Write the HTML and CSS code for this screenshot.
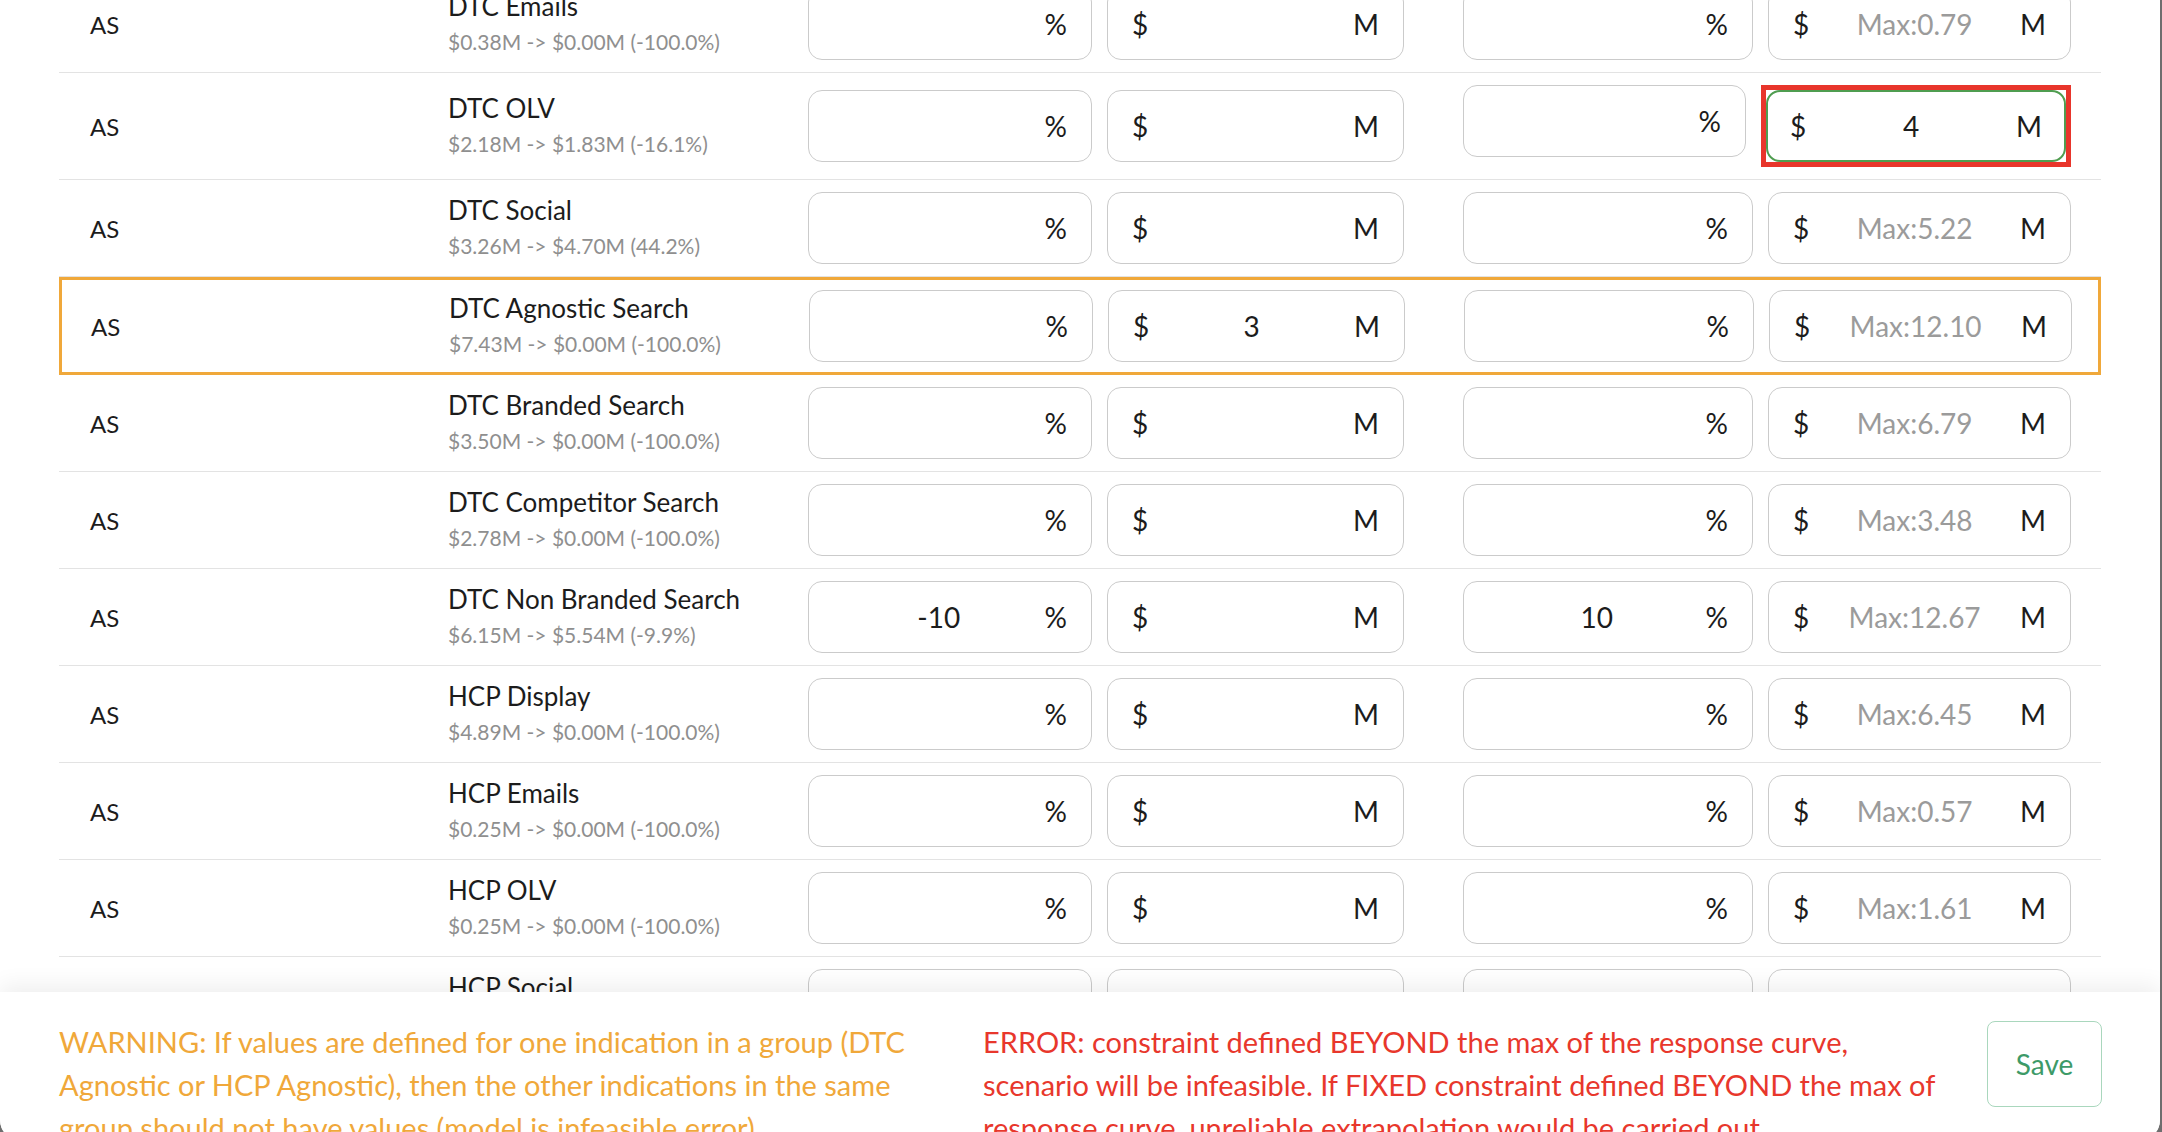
FILE: index.html
```html
<!DOCTYPE html>
<html lang="en">
<head>
    <meta charset="UTF-8">
    <meta name="viewport" content="width=device-width, initial-scale=1.0">
    <title>Constraints</title>
    <link rel="stylesheet" href="styles.css">
</head>
<body>
    <div class="modal">
        <div class="modal-body">
            <div class="constraint-table">
                <div class="row">
                    <div class="group">AS</div>
                    <div class="channel">
                        <div class="channel-name">DTC Emails</div>
                        <div class="channel-spend">$0.38M -&gt; $0.00M (-100.0%)</div>
                    </div>
                    <div class="limits min">
                        <label class="field pct"><input type="text"><span class="unit">%</span></label>
                        <label class="field amt"><span class="unit">$</span><input type="text"><span class="unit">M</span></label>
                    </div>
                    <div class="limits max">
                        <label class="field pct"><input type="text"><span class="unit">%</span></label>
                        <label class="field amt"><span class="unit">$</span><input type="text" placeholder="Max:0.79"><span class="unit">M</span></label>
                    </div>
                </div>

                <div class="row">
                    <div class="group">AS</div>
                    <div class="channel">
                        <div class="channel-name">DTC OLV</div>
                        <div class="channel-spend">$2.18M -&gt; $1.83M (-16.1%)</div>
                    </div>
                    <div class="limits min">
                        <label class="field pct"><input type="text"><span class="unit">%</span></label>
                        <label class="field amt"><span class="unit">$</span><input type="text"><span class="unit">M</span></label>
                    </div>
                    <div class="limits max">
                        <label class="field pct"><input type="text"><span class="unit">%</span></label>
                        <div class="over-max">
                            <label class="field amt active"><span class="unit">$</span><input type="text" value="4"><span class="unit">M</span></label>
                        </div>
                    </div>
                </div>

                <div class="row">
                    <div class="group">AS</div>
                    <div class="channel">
                        <div class="channel-name">DTC Social</div>
                        <div class="channel-spend">$3.26M -&gt; $4.70M (44.2%)</div>
                    </div>
                    <div class="limits min">
                        <label class="field pct"><input type="text"><span class="unit">%</span></label>
                        <label class="field amt"><span class="unit">$</span><input type="text"><span class="unit">M</span></label>
                    </div>
                    <div class="limits max">
                        <label class="field pct"><input type="text"><span class="unit">%</span></label>
                        <label class="field amt"><span class="unit">$</span><input type="text" placeholder="Max:5.22"><span class="unit">M</span></label>
                    </div>
                </div>

                <div class="row group-warning">
                    <div class="group">AS</div>
                    <div class="channel">
                        <div class="channel-name">DTC Agnostic Search</div>
                        <div class="channel-spend">$7.43M -&gt; $0.00M (-100.0%)</div>
                    </div>
                    <div class="limits min">
                        <label class="field pct"><input type="text"><span class="unit">%</span></label>
                        <label class="field amt"><span class="unit">$</span><input type="text" value="3"><span class="unit">M</span></label>
                    </div>
                    <div class="limits max">
                        <label class="field pct"><input type="text"><span class="unit">%</span></label>
                        <label class="field amt"><span class="unit">$</span><input type="text" placeholder="Max:12.10"><span class="unit">M</span></label>
                    </div>
                </div>

                <div class="row">
                    <div class="group">AS</div>
                    <div class="channel">
                        <div class="channel-name">DTC Branded Search</div>
                        <div class="channel-spend">$3.50M -&gt; $0.00M (-100.0%)</div>
                    </div>
                    <div class="limits min">
                        <label class="field pct"><input type="text"><span class="unit">%</span></label>
                        <label class="field amt"><span class="unit">$</span><input type="text"><span class="unit">M</span></label>
                    </div>
                    <div class="limits max">
                        <label class="field pct"><input type="text"><span class="unit">%</span></label>
                        <label class="field amt"><span class="unit">$</span><input type="text" placeholder="Max:6.79"><span class="unit">M</span></label>
                    </div>
                </div>

                <div class="row">
                    <div class="group">AS</div>
                    <div class="channel">
                        <div class="channel-name">DTC Competitor Search</div>
                        <div class="channel-spend">$2.78M -&gt; $0.00M (-100.0%)</div>
                    </div>
                    <div class="limits min">
                        <label class="field pct"><input type="text"><span class="unit">%</span></label>
                        <label class="field amt"><span class="unit">$</span><input type="text"><span class="unit">M</span></label>
                    </div>
                    <div class="limits max">
                        <label class="field pct"><input type="text"><span class="unit">%</span></label>
                        <label class="field amt"><span class="unit">$</span><input type="text" placeholder="Max:3.48"><span class="unit">M</span></label>
                    </div>
                </div>

                <div class="row">
                    <div class="group">AS</div>
                    <div class="channel">
                        <div class="channel-name">DTC Non Branded Search</div>
                        <div class="channel-spend">$6.15M -&gt; $5.54M (-9.9%)</div>
                    </div>
                    <div class="limits min">
                        <label class="field pct"><input type="text" value="-10"><span class="unit">%</span></label>
                        <label class="field amt"><span class="unit">$</span><input type="text"><span class="unit">M</span></label>
                    </div>
                    <div class="limits max">
                        <label class="field pct"><input type="text" value="10"><span class="unit">%</span></label>
                        <label class="field amt"><span class="unit">$</span><input type="text" placeholder="Max:12.67"><span class="unit">M</span></label>
                    </div>
                </div>

                <div class="row">
                    <div class="group">AS</div>
                    <div class="channel">
                        <div class="channel-name">HCP Display</div>
                        <div class="channel-spend">$4.89M -&gt; $0.00M (-100.0%)</div>
                    </div>
                    <div class="limits min">
                        <label class="field pct"><input type="text"><span class="unit">%</span></label>
                        <label class="field amt"><span class="unit">$</span><input type="text"><span class="unit">M</span></label>
                    </div>
                    <div class="limits max">
                        <label class="field pct"><input type="text"><span class="unit">%</span></label>
                        <label class="field amt"><span class="unit">$</span><input type="text" placeholder="Max:6.45"><span class="unit">M</span></label>
                    </div>
                </div>

                <div class="row">
                    <div class="group">AS</div>
                    <div class="channel">
                        <div class="channel-name">HCP Emails</div>
                        <div class="channel-spend">$0.25M -&gt; $0.00M (-100.0%)</div>
                    </div>
                    <div class="limits min">
                        <label class="field pct"><input type="text"><span class="unit">%</span></label>
                        <label class="field amt"><span class="unit">$</span><input type="text"><span class="unit">M</span></label>
                    </div>
                    <div class="limits max">
                        <label class="field pct"><input type="text"><span class="unit">%</span></label>
                        <label class="field amt"><span class="unit">$</span><input type="text" placeholder="Max:0.57"><span class="unit">M</span></label>
                    </div>
                </div>

                <div class="row">
                    <div class="group">AS</div>
                    <div class="channel">
                        <div class="channel-name">HCP OLV</div>
                        <div class="channel-spend">$0.25M -&gt; $0.00M (-100.0%)</div>
                    </div>
                    <div class="limits min">
                        <label class="field pct"><input type="text"><span class="unit">%</span></label>
                        <label class="field amt"><span class="unit">$</span><input type="text"><span class="unit">M</span></label>
                    </div>
                    <div class="limits max">
                        <label class="field pct"><input type="text"><span class="unit">%</span></label>
                        <label class="field amt"><span class="unit">$</span><input type="text" placeholder="Max:1.61"><span class="unit">M</span></label>
                    </div>
                </div>

                <div class="row">
                    <div class="group">AS</div>
                    <div class="channel">
                        <div class="channel-name">HCP Social</div>
                        <div class="channel-spend">$0.31M -&gt; $0.00M (-100.0%)</div>
                    </div>
                    <div class="limits min">
                        <label class="field pct"><input type="text"><span class="unit">%</span></label>
                        <label class="field amt"><span class="unit">$</span><input type="text"><span class="unit">M</span></label>
                    </div>
                    <div class="limits max">
                        <label class="field pct"><input type="text"><span class="unit">%</span></label>
                        <label class="field amt"><span class="unit">$</span><input type="text" placeholder="Max:0.64"><span class="unit">M</span></label>
                    </div>
                </div>
            </div>
        </div>

        <div class="modal-footer">
            <p class="warning">WARNING: If values are defined for one indication in a group (DTC Agnostic or HCP Agnostic), then the other indications in the same group should not have values (model is infeasible error).</p>
            <p class="error">ERROR: constraint defined BEYOND the max of the response curve, scenario will be infeasible. If FIXED constraint defined BEYOND the max of response curve, unreliable extrapolation would be carried out.</p>
            <button class="save-btn">Save</button>
        </div>
    </div>
</body>
</html>
```

FILE: styles.css
```css
body {
    margin: 0;
    height: 100vh;
    overflow: hidden;
    font-family: Lato, "Liberation Sans", sans-serif;
    background-color: #6e6e6e;
    color: #1c1c1c;
}
.modal {
    position: relative;
    width: 2160px;
    height: 1140px;
    overflow: hidden;
    background-color: #fff;
    border-radius: 0 0 20px 20px;
}
/* scrolled a little past the first row */
.modal-body {
    margin-top: -24px;
}
.constraint-table {
    margin: 0 59px;
}
.row {
    display: flex;
    align-items: center;
    padding: 12px 30px 12px 31px;
    border-bottom: 1px solid #e3e3e3;
}
.row.group-warning {
    border: 3px solid #f0a83a;
    padding: 10px 28px 10px 29px;
}
.group {
    width: 358px;
    flex-shrink: 0;
    font-size: 24px;
}
.channel {
    width: 360px;
    flex-shrink: 0;
    padding-bottom: 3px;
}
.channel-name {
    font-size: 26px;
    line-height: 34px;
}
.channel-spend {
    margin-top: 5px;
    font-size: 21px;
    line-height: 28px;
    color: #8f8f8f;
}
.limits {
    display: flex;
    gap: 15px;
}
.limits.min {
    width: 596px;
    margin-right: 59px;
}
.limits.max {
    width: 608px;
}
.field {
    display: flex;
    align-items: center;
    box-sizing: border-box;
    height: 72px;
    padding: 0 24px;
    border: 1px solid #cbcbcb;
    border-radius: 14px;
    background-color: #fff;
    font-size: 28px;
}
.field.pct {
    flex: 1;
    min-width: 0;
}
.min .field.amt {
    width: 297px;
}
.max .field.amt {
    width: 303px;
}
.field input {
    flex: 1;
    min-width: 0;
    padding: 0;
    border: none;
    outline: none;
    background: transparent;
    font: inherit;
    color: #1c1c1c;
    text-align: center;
}
.field input::placeholder {
    color: #9b9b9b;
}
.over-max {
    width: 310px;
    box-sizing: border-box;
    border: 5px solid #e8352b;
}
.over-max .field.amt {
    width: 100%;
    border: 2.5px solid #4f9d50;
    padding: 0 22px;
}
.modal-footer {
    position: absolute;
    left: 0;
    right: 0;
    bottom: 0;
    height: 148px;
    box-sizing: border-box;
    display: flex;
    align-items: flex-start;
    padding: 28px 58px 0 59px;
    background-color: #fff;
    box-shadow: 0 -6px 22px rgba(0, 0, 0, 0.07);
}
.modal-footer p {
    margin: 0;
    font-size: 29px;
    line-height: 43px;
}
.warning {
    width: 880px;
    flex-shrink: 0;
    color: #f0a83a;
}
.error {
    flex: 1;
    margin-left: 44px !important;
    color: #e8372c;
}
.save-btn {
    width: 115px;
    height: 86px;
    flex-shrink: 0;
    margin: 1px 0 0 27px;
    border: 1px solid #a9d7bd;
    border-radius: 8px;
    background-color: #fff;
    color: #3d9a68;
    font-family: inherit;
    font-size: 28px;
    cursor: pointer;
}
```
